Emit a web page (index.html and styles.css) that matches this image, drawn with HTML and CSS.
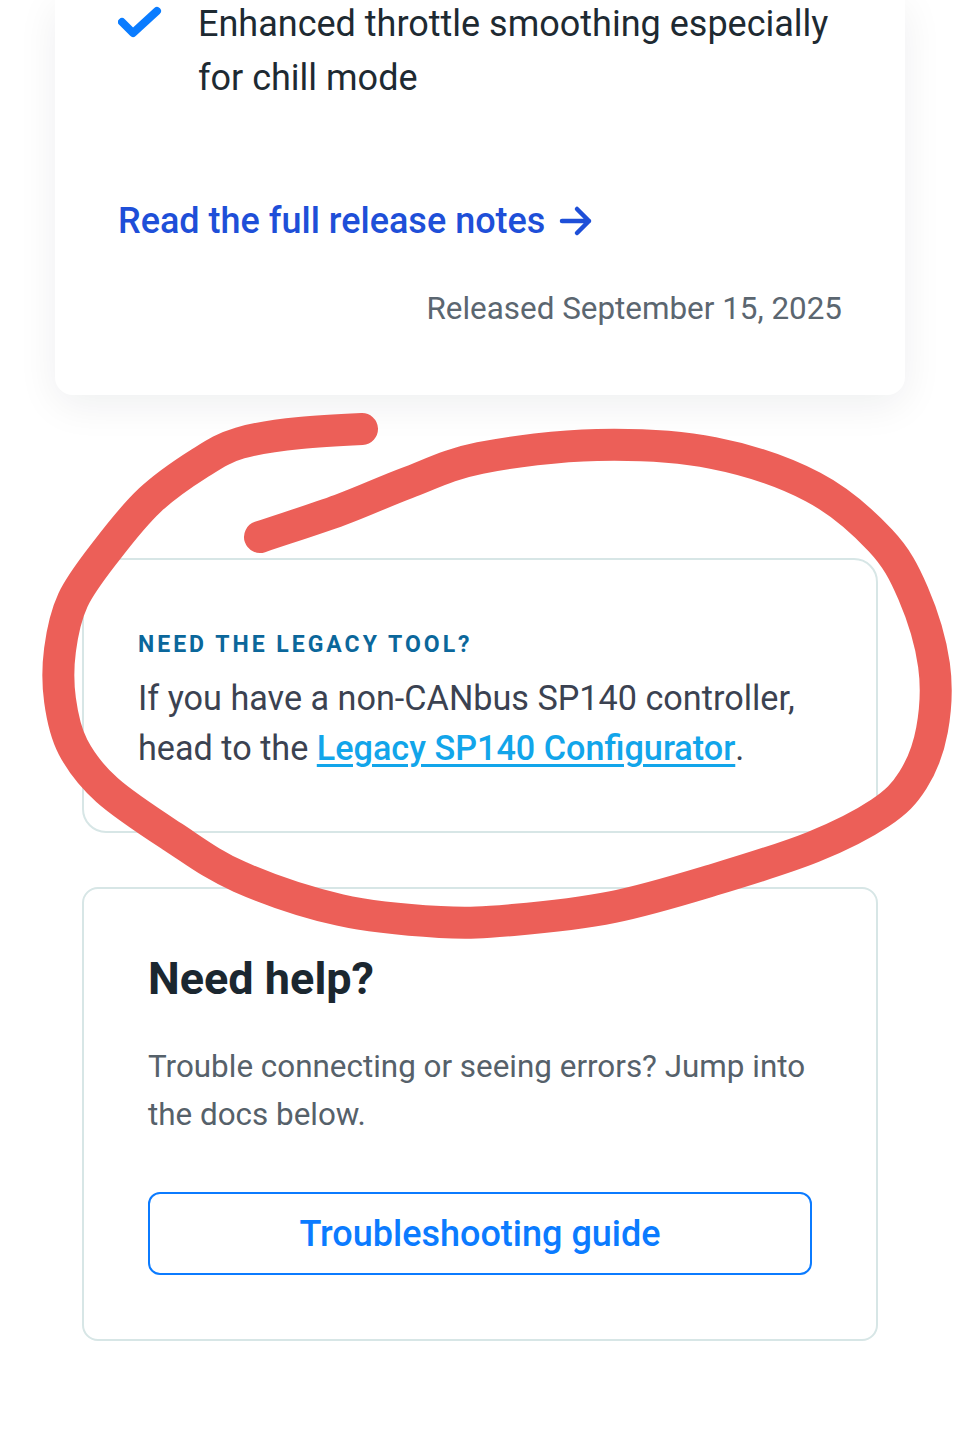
FILE: index.html
```html
<!DOCTYPE html>
<html lang="en">
<head>
<meta charset="utf-8">
<title>SP140 Configurator</title>
<link rel="stylesheet" href="styles.css">
</head>
<body>
<main class="page">
  <section class="release-card">
    <ul class="changes">
      <li class="change">
        <svg class="check" viewBox="0 0 44 40" aria-hidden="true"><path d="M4 20 L15 31 L39 9" fill="none" stroke="#0a7cff" stroke-width="8" stroke-linecap="round" stroke-linejoin="round"/></svg>
        <span>Enhanced throttle smoothing especially for chill mode</span>
      </li>
    </ul>
    <p class="notes"><a class="notes-link" href="#">Read the full release notes<svg class="arrow" viewBox="0 0 36 36" aria-hidden="true"><path d="M4 18 H31 M19 6 L31 18 L19 30" fill="none" stroke="#1e4fd8" stroke-width="4.5" stroke-linecap="round" stroke-linejoin="round"/></svg></a></p>
    <p class="released">Released September 15, 2025</p>
  </section>

  <section class="legacy-card">
    <p class="eyebrow">NEED THE LEGACY TOOL?</p>
    <p class="legacy-text">If you have a non-CANbus SP140 controller, head to the <a href="#">Legacy SP140 Configurator</a>.</p>
  </section>

  <section class="help-card">
    <h2 class="help-title">Need help?</h2>
    <p class="help-text">Trouble connecting or seeing errors? Jump into the docs below.</p>
    <a class="help-btn" href="#">Troubleshooting guide</a>
  </section>

  <svg class="annotation" viewBox="0 0 960 1435" aria-hidden="true">
    <path d="M362,429 C341,430 320,431 300,433 S257,438 240,443 S215,453.5 200,463 S165.5,485.5 150,500 S119.8,533.3 107,550 S80.8,583.3 73,600 S62.2,633.3 60,650 S57.8,683.8 60,700 S65.2,732 73,747 S90.3,775 107,790 S150.8,822.5 173,837 S212.2,864.8 240,877 S306.7,902.5 340,910 S411.2,920.3 440,922 S484.2,922.5 513,920 S579.7,913.7 613,907 S679.7,890 713,880 S785.2,858.2 813,847 S863.3,824.2 880,813 S904.3,793.8 913,780 S928.5,749.2 932,730 S937.2,687.8 934,665 S922,613.8 913,593 S896.7,557.7 880,540 S840.8,501.5 813,487 S749,460 713,453 S635.8,444.2 597,445 S511.7,451.7 480,458 S430.3,474.3 407,483 S364.5,501 340,510 S286.7,528 260,537" fill="none" stroke="#ec5f58" stroke-width="32" stroke-linecap="round" stroke-linejoin="round"/>
  </svg>
</main>
</body>
</html>
```

FILE: styles.css
```css
html, body {
  margin: 0;
  padding: 0;
  background: #ffffff;
}

body {
  font-family: Roboto, "Noto Sans", "Liberation Sans", sans-serif;
}

.page {
  position: relative;
  height: 1435px;
  overflow: hidden;
}

.release-card {
  width: 850px;
  box-sizing: border-box;
  margin: -3px auto 0;
  padding: 0 63px 62px;
  background: #ffffff;
  border-radius: 0 0 18px 18px;
  box-shadow: 0 10px 40px rgba(20, 35, 45, 0.07);
}

.changes {
  list-style: none;
  margin: 0;
  padding: 0;
}

.change {
  display: flex;
  gap: 36px;
  font-size: 36px;
  line-height: 54px;
  color: #1e2a32;
}

.check {
  flex: none;
  width: 44px;
  height: 40px;
  margin-top: 5px;
}

.notes {
  margin: 89px 0 0;
}

.notes-link {
  display: inline-flex;
  align-items: center;
  gap: 13px;
  font-size: 36px;
  line-height: 54px;
  font-weight: 500;
  color: #1e4fd8;
  text-decoration: none;
}

.arrow {
  width: 36px;
  height: 36px;
}

.released {
  margin: 37px 0 0;
  text-align: right;
  font-size: 31.4px;
  line-height: 48px;
  color: #5b6670;
}

.legacy-card {
  width: 796px;
  box-sizing: border-box;
  margin: 163px auto 0;
  padding: 68px 54px 58px;
  border: 2px solid #d7e6e6;
  border-radius: 24px;
}

.eyebrow {
  margin: 0;
  font-size: 23px;
  line-height: 34px;
  font-weight: 700;
  letter-spacing: 3px;
  color: #0b679b;
}

.legacy-text {
  margin: 11px 0 0;
  font-size: 34.2px;
  line-height: 50px;
  color: #3b4251;
}

.legacy-text a {
  color: #12a5ea;
  font-weight: 500;
  text-decoration: underline;
  text-decoration-thickness: 3px;
  text-underline-offset: 4px;
}

.help-card {
  width: 796px;
  box-sizing: border-box;
  margin: 54px auto 0;
  padding: 62px 64px 64px;
  border: 2px solid #d7e6e6;
  border-radius: 16px;
}

.help-title {
  margin: 0;
  font-size: 45px;
  line-height: 55px;
  font-weight: 700;
  color: #1b2730;
}

.help-text {
  margin: 37px 0 0;
  font-size: 31.4px;
  line-height: 48px;
  color: #56616a;
}

.help-btn {
  display: flex;
  justify-content: center;
  align-items: center;
  box-sizing: border-box;
  height: 83px;
  margin-top: 53px;
  border: 2px solid #0b7bff;
  border-radius: 12px;
  font-size: 36px;
  font-weight: 500;
  color: #0b7bff;
  text-decoration: none;
}

.annotation {
  position: absolute;
  top: 0;
  left: 0;
  width: 960px;
  height: 1435px;
  pointer-events: none;
}
```
